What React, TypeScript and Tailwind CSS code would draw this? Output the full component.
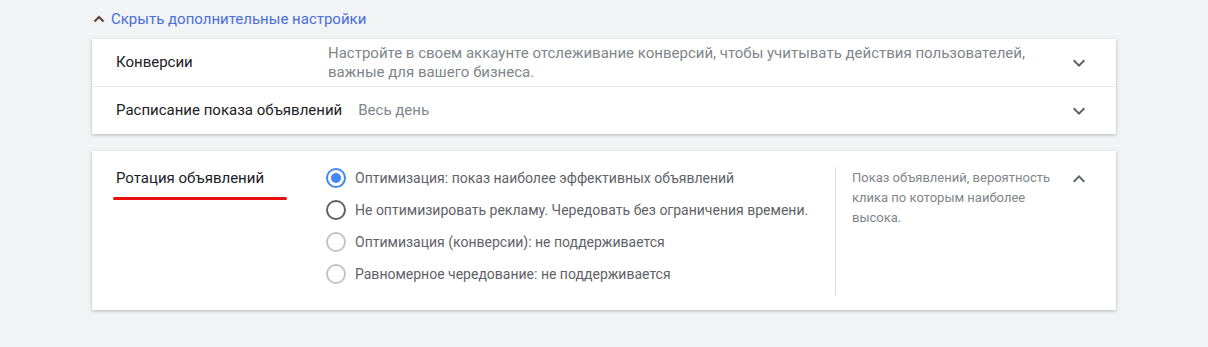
import React from 'react';

const ChevronDown = () => (
  <svg width="24" height="24" viewBox="0 0 24 24" fill="#5f6368">
    <path d="M7.41 8.59 12 13.17l4.59-4.58L18 10l-6 6-6-6z" />
  </svg>
);

const ChevronUp = () => (
  <svg width="24" height="24" viewBox="0 0 24 24" fill="#5f6368">
    <path d="M7.41 15.41 12 10.83l4.59 4.58L18 14l-6-6-6 6z" />
  </svg>
);

const SmallChevronUp = () => (
  <svg width="14" height="14" viewBox="0 0 14 14" fill="none" stroke="#5b4a3a" strokeWidth="2.2">
    <path d="M2.5 9.5 7 5l4.5 4.5" />
  </svg>
);

const options = [
  { label: 'Оптимизация: показ наиболее эффективных объявлений', state: 'checked' },
  { label: 'Не оптимизировать рекламу. Чередовать без ограничения времени.', state: 'normal' },
  { label: 'Оптимизация (конверсии): не поддерживается', state: 'disabled' },
  { label: 'Равномерное чередование: не поддерживается', state: 'disabled' },
];

const Radio = ({ state }: { state: string }) => {
  if (state === 'checked') {
    return (
      <span className="flex h-5 w-5 items-center justify-center rounded-full border-2 border-[#4285f4]">
        <span className="h-2.5 w-2.5 rounded-full bg-[#4285f4]" />
      </span>
    );
  }
  return (
    <span
      className={
        state === 'normal'
          ? 'block h-5 w-5 rounded-full border-2 border-[#5f6368]'
          : 'block h-5 w-5 rounded-full border-2 border-[#c4c4c4]'
      }
    />
  );
};

export default function App() {
  return (
    <div className="min-h-[347px] bg-[#f1f3f4] px-[92px] pt-2 pb-9 font-['Roboto',sans-serif] text-[15px]">
      <div className="flex h-[22px] items-center text-[#4a6fd8]">
        <span className="mr-[5px] flex">
          <SmallChevronUp />
        </span>
        Скрыть дополнительные настройки
      </div>

      <div className="mt-[9px] w-[1024px] bg-white shadow-[0_1px_3px_rgba(60,64,67,0.35)]">
        <div className="flex h-[47px] items-center pl-6 pr-[25px]">
          <div className="min-w-[196px] mr-4 text-[#202124]">Конверсии</div>
          <div className="flex-1 leading-[19px] text-[#80868b]">
            Настройте в своем аккаунте отслеживание конверсий, чтобы учитывать действия пользователей,
            <br />
            важные для вашего бизнеса.
          </div>
          <ChevronDown />
        </div>
        <div className="border-t border-[#e8eaed]" />
        <div className="flex h-[47px] items-center pl-6 pr-[25px]">
          <div className="min-w-[196px] mr-4 text-[#202124]">Расписание показа объявлений</div>
          <div className="flex-1 text-[#80868b]">Весь день</div>
          <ChevronDown />
        </div>
      </div>

      <div className="mt-[17px] flex w-[1024px] bg-white pt-4 pb-[15px] pl-6 pr-[25px] shadow-[0_1px_3px_rgba(60,64,67,0.35)]">
        <div className="w-[210px] pt-[1px]">
          <div className="text-[15px] leading-5 text-[#202124]">Ротация объявлений</div>
          <div className="ml-[-3px] mt-[9px] h-[3px] w-[174px] rounded-full bg-[#e8100f]" />
        </div>
        <div className="flex w-[509px] flex-col gap-3 pt-[1px]">
          {options.map((o) => (
            <label key={o.label} className="flex h-5 items-center gap-[9px] text-[14px] text-[#5f6368]">
              <Radio state={o.state} />
              {o.label}
            </label>
          ))}
        </div>
        <div className="h-[128px] border-l border-[#dadce0]" />
        <div className="ml-4 w-[208px] pt-[1px] text-[13px] leading-5 text-[#80868b]">
          Показ объявлений, вероятность клика по которым наиболее высока.
        </div>
        <div className="ml-auto">
          <ChevronUp />
        </div>
      </div>
    </div>
  );
}
